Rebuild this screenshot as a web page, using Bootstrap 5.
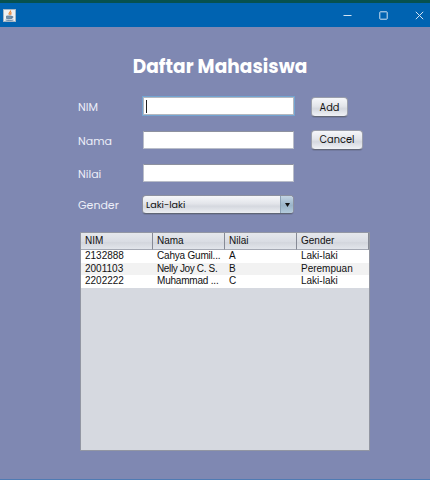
<!DOCTYPE html>
<html lang="id">
<head>
<meta charset="utf-8">
<title>Daftar Mahasiswa</title>
<meta name="viewport" content="width=device-width, initial-scale=1">
<link rel="stylesheet" href="https://cdn.jsdelivr.net/npm/bootstrap@5.3.0/dist/css/bootstrap.min.css">
<style>
html, body { height: 100%; overflow: hidden; }
body { background: #7f88b2; font-family: Poppins, Inter, sans-serif; font-size: 11px; line-height: 1; border-bottom: 1px solid #4f7bb3; }
.titlebar { height: 27px; flex: none; background: #0063b1; border-top: 3px solid #07514f; padding-left: 3px; }
.titlebar svg { display: block; }
.win-buttons { padding-right: 6px; }
.win-buttons svg { fill: none; stroke: #d3e4f2; stroke-width: 1; margin-left: 27px; }
.heading { font-size: 18.5px; font-weight: 700; line-height: 24px; margin-top: 28px; padding-left: 10px; color: #fff; letter-spacing: .05px; }
.form-area { padding: 11px 0 0 78px; }
.form-line { display: grid; grid-template-columns: 64px 152px 1fr; align-items: center; }
.h-a { height: 32px; } .h-b { height: 36px; } .h-c { height: 30px; } .h-d { height: 33px; }
.form-line label { color: #eceef8; font-weight: 400; padding-top: 2px; }
.form-line .form-control { height: 18px; min-height: 0; padding: 0 2px; border: 1px solid #b9bdc9; border-top-color: #8d919f; border-radius: 0; font-size: 11px; width: 151px; margin-left: 1px; background: #fff; }
.form-line .focused { border: 1px solid #b3b7bf; outline: 1px solid #73a4d1; display: flex; align-items: center; }
.caret { width: 1px; height: 13px; background: #222; }
.nimbus { font: inherit; font-size: 9.8px; color: #111; padding: 1px 0 0; border: 1px solid #9a9eab; border-bottom-color: #636878; border-radius: 4px; background: linear-gradient(#f6f7fa, #e3e5ea 45%, #d5d8df 60%, #f0f2f6); height: 20px; margin-left: 17px; margin-top: 2px; box-shadow: 0 1px 0 #737ba0; justify-self: start; }
.w-add { width: 37px; } .w-cancel { width: 52px; margin-top: 0; padding-top: 0; }
.combo { height: 19px; width: 152px; border: 1px solid #8c909f; border-bottom-color: #5f6575; border-radius: 4px; background: linear-gradient(#f6f7fa, #e3e5ea 45%, #d5d8df 60%, #eceef2); overflow: hidden; font-size: 9.6px; color: #111; box-shadow: 0 1px 0 #737ba0; padding-left: 3px; }
.combo-arrow { width: 13px; align-self: stretch; background: linear-gradient(#c4d5e4, #9ab4c9 55%, #b4cbdc); border-left: 1px solid #8ba1b5; }
.grid-box { margin: 11px 60px 0 80px; height: 219px; background: #d6d9e0; border: 1px solid #9296a3; font-family: "Liberation Sans", Arial, sans-serif; font-size: 10px; color: #111; }
.data-table { width: 100%; table-layout: fixed; border-collapse: separate; border-spacing: 0; }
.data-table th { font-weight: 400; height: 17px; padding: 0 0 0 4px; background: linear-gradient(#e6e8ec, #d9dce3 55%, #d3d6dd 60%, #e2e5eb); border-right: 1px solid #868a96; border-bottom: 1px solid #a5a9b4; vertical-align: middle; }
.data-table td { height: 12.5px; line-height: 12px; padding: 0 0 0 4px; background: #fff; white-space: nowrap; overflow: hidden; }
.data-table td:nth-child(2) { letter-spacing: -.2px; }
.data-table tr.alt td:nth-child(2) { letter-spacing: -.35px; }
.data-table tr.alt td { background: #f2f2f2; }
</style>
<script src="https://cdn.jsdelivr.net/npm/bootstrap@5.3.0/dist/js/bootstrap.bundle.min.js"></script>
</head>
<body class="d-flex flex-column">
<header class="titlebar d-flex align-items-center justify-content-between">
  <svg width="13" height="13" viewBox="0 0 13 13"><rect x=".5" y=".5" width="12" height="12" fill="#edf0f2" stroke="#a5b6c4"/><path d="M7.500 1.500c1 1.500-3 2.400-1 4.500M8.500 3.500c-1.500 1-1 1.500-.5 2.500" fill="none" stroke="#e8873a" stroke-width="1.200"/><path d="M3.500 7h5v2.500q-2.500 1-5 0zM8.500 7.500q2-.5 1.500 1l-1.500 1M2.500 11q4 1 8 0" fill="#7591aa" stroke="#5f7f9d" stroke-width=".8"/></svg>
  <div class="win-buttons d-flex align-items-center">
    <svg width="9" height="9" viewBox="0 0 9 9"><path d="M.5 4.500H8.500"/></svg>
    <svg width="9" height="9" viewBox="0 0 9 9"><rect x=".8" y=".8" width="7.400" height="7.400" rx=".6"/></svg>
    <svg width="9" height="9" viewBox="0 0 9 9"><path d="M.8.8l7.400 7.400M8.200.8L.8 8.200"/></svg>
  </div>
</header>
<main>
  <h1 class="heading text-center mb-0">Daftar Mahasiswa</h1>
  <div class="form-area">
    <div class="form-line h-a"><label>NIM</label><div class="form-control focused"><span class="caret"></span></div><button class="nimbus w-add">Add</button></div>
    <div class="form-line h-b"><label>Nama</label><input class="form-control" type="text" aria-label="Nama"><button class="nimbus w-cancel">Cancel</button></div>
    <div class="form-line h-c"><label>Nilai</label><input class="form-control" type="text" aria-label="Nilai"></div>
    <div class="form-line h-d"><label>Gender</label>
      <div class="combo d-flex align-items-center justify-content-between"><span>Laki-laki</span><span class="combo-arrow d-flex align-items-center justify-content-center"><svg width="5" height="4" viewBox="0 0 5 4"><path d="M0 0h5L2.500 4z" fill="#111"/></svg></span></div></div>
  </div>
  <div class="grid-box">
    <table class="data-table">
      <thead><tr><th>NIM</th><th>Nama</th><th>Nilai</th><th>Gender</th></tr></thead>
      <tbody>
        <tr><td>2132888</td><td>Cahya Gumil...</td><td>A</td><td>Laki-laki</td></tr>
        <tr class="alt"><td>2001103</td><td>Nelly Joy C. S.</td><td>B</td><td>Perempuan</td></tr>
        <tr><td>2202222</td><td>Muhammad ...</td><td>C</td><td>Laki-laki</td></tr>
      </tbody>
    </table>
  </div>
</main>
</body>
</html>
